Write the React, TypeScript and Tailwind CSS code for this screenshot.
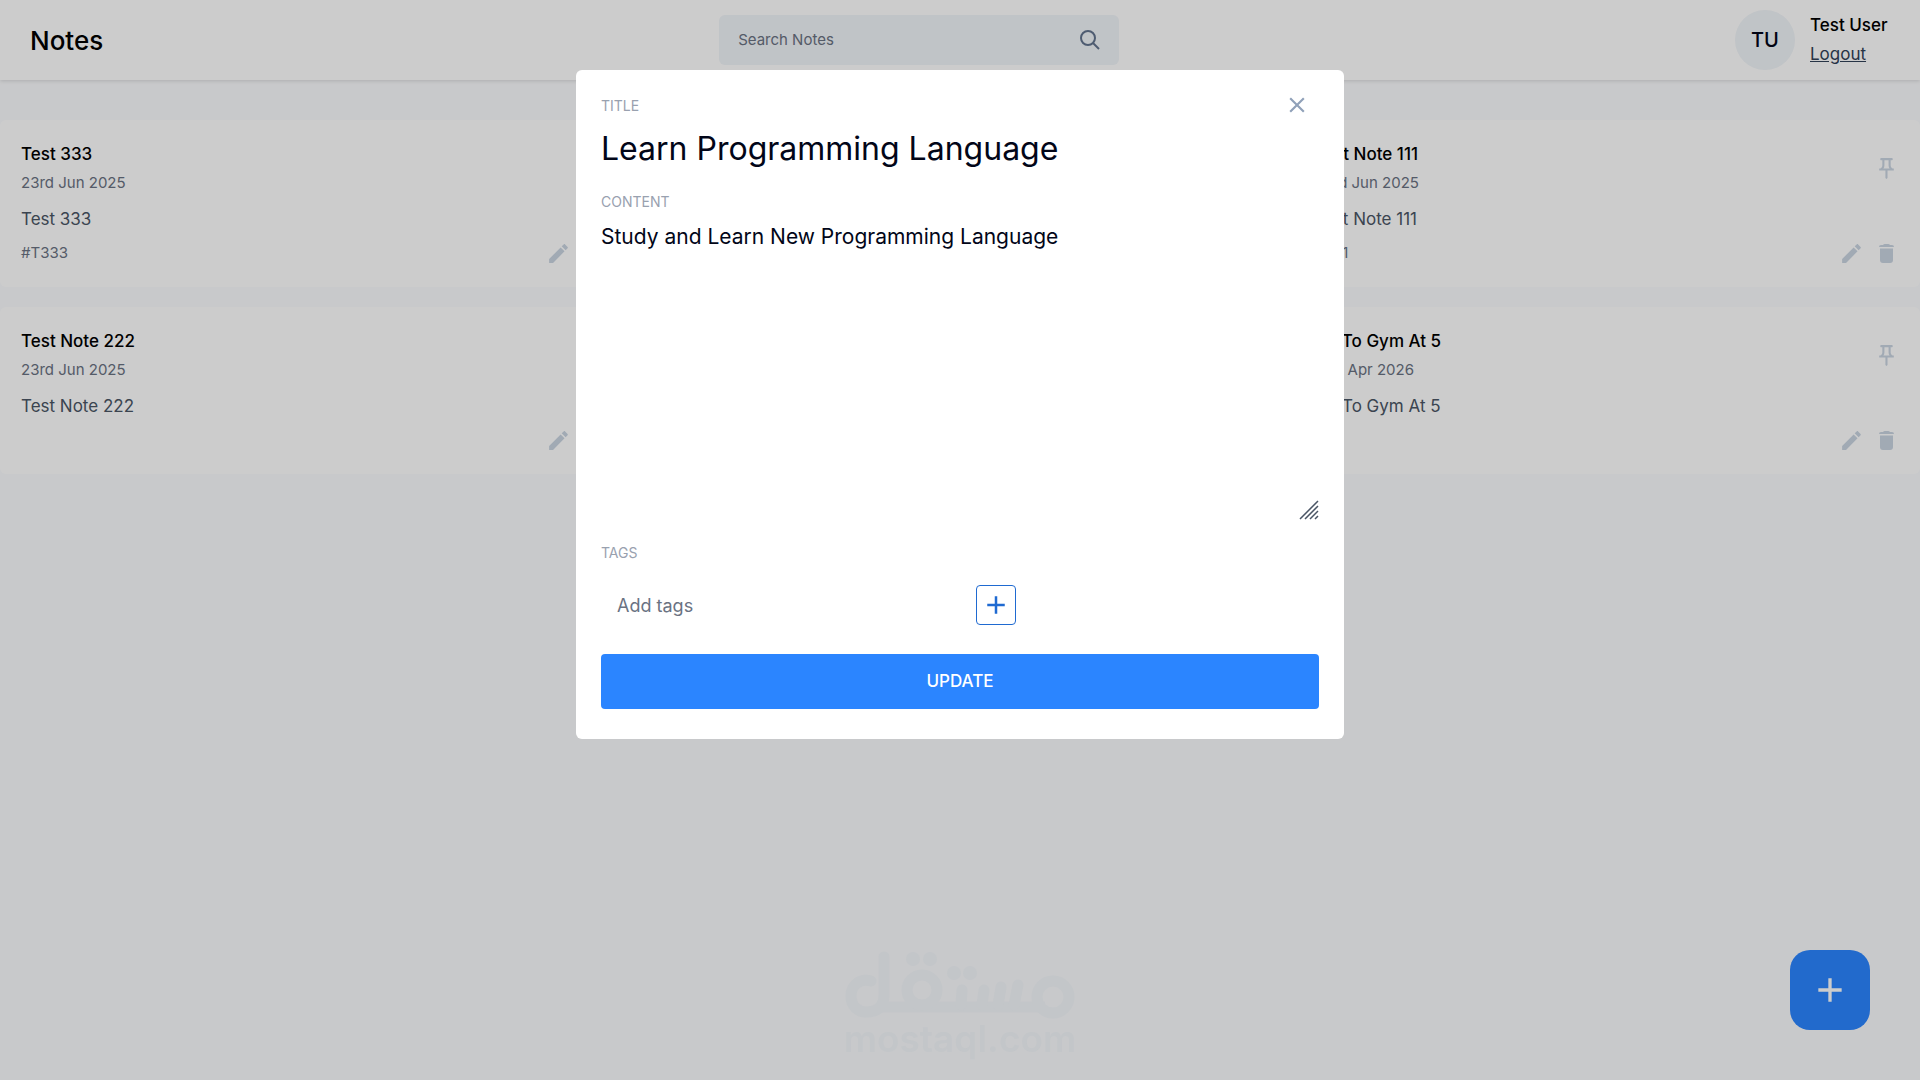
import { useState } from 'react'
import { IoMdCreate } from 'react-icons/io'
import { MdAdd, MdClose, MdOutlinePushPin } from 'react-icons/md'

type Note = {
    id: number
    title: string
    date: string
    content: string
    tags: string[]
}

const NOTES: Note[] = [
    { id: 1, title: 'Test 333', date: '23rd Jun 2025', content: 'Test 333', tags: ['T333'] },
    { id: 2, title: 'Learn Programming Language', date: '23rd Jun 2025', content: 'Study and Learn New Programming Language', tags: [] },
    { id: 3, title: 'Test Note 111', date: '23rd Jun 2025', content: 'Test Note 111', tags: ['1111'] },
    { id: 4, title: 'Test Note 222', date: '23rd Jun 2025', content: 'Test Note 222', tags: [] },
    { id: 5, title: 'Read A Book', date: '23rd Jun 2025', content: 'Read A Book', tags: [] },
    { id: 6, title: 'Go To Gym At 5', date: '15th Apr 2026', content: 'Go To Gym At 5', tags: [] },
]

function SearchIcon() {
    return (
        <svg width="20" height="20" viewBox="0 0 20 20" fill="none" stroke="currentColor" strokeWidth="2">
            <circle cx="8" cy="8" r="7" />
            <path d="M13 13L19 19" />
        </svg>
    )
}

function TrashIcon() {
    return (
        <svg width="25" height="25" viewBox="0 0 25 25" fill="currentColor">
            <path d="M5 6Q5 4 7 4H9Q9.500 3 11 3H14Q15.500 3 16 4H18Q20 4 20 6Z" />
            <path d="M6 7.500H19V19Q19 22 16 22H9Q6 22 6 19Z" />
        </svg>
    )
}

function Navbar() {
    const [query, setQuery] = useState('')

    return (
        <header className="flex h-20 items-center justify-between bg-white px-[30px] shadow-[0_1px_4px_rgba(0,0,0,0.14)]">
            <h2 className="text-[26px] font-medium text-black">Notes</h2>

            <div className="flex h-[50px] w-[400px] items-center rounded-md bg-slate-100 px-[19px]">
                <input
                    type="text"
                    aria-label="Search Notes"
                    placeholder="Search Notes"
                    value={query}
                    onChange={(e) => setQuery(e.target.value)}
                    className="w-full bg-transparent text-[15px] outline-none placeholder:text-gray-500"
                />
                <button aria-label="Search" className="text-slate-500">
                    <SearchIcon />
                </button>
            </div>

            <div className="flex items-center gap-[15px]">
                <div className="flex size-[60px] items-center justify-center rounded-full bg-slate-100 text-xl font-medium text-slate-950">
                    TU
                </div>
                <div className="flex min-w-20 flex-col items-start">
                    <p className="text-[17px] leading-[29px] font-medium text-black">Test User</p>
                    <button className="text-[17px] leading-[29px] text-slate-700 underline">Logout</button>
                </div>
            </div>
        </header>
    )
}

function NoteCard({ note }: { note: Note }) {
    return (
        <article className="flex h-[167px] flex-col rounded-md bg-white px-[21px] pt-[22px] pb-5">
            <div className="flex items-start justify-between">
                <div>
                    <h6 className="text-[17px] leading-[25px] font-medium text-black">{note.title}</h6>
                    <span className="block text-[15px] leading-8 text-gray-500">{note.date}</span>
                </div>
                <button aria-label="Pin note" className="mt-3.5 text-slate-300">
                    <MdOutlinePushPin size={25} />
                </button>
            </div>
            <p className="mt-2 text-[17px] leading-[25px] text-gray-600">{note.content}</p>
            <div className="flex h-[42px] shrink-0 items-center justify-between">
                <div className="text-[15px] text-gray-500">{note.tags.map((tag) => `#${tag} `)}</div>
                <div className="flex items-center gap-2.5 text-slate-300">
                    <button aria-label="Edit note">
                        <IoMdCreate size={25} />
                    </button>
                    <button aria-label="Delete note">
                        <TrashIcon />
                    </button>
                </div>
            </div>
        </article>
    )
}

function EditNoteModal() {
    const [title, setTitle] = useState('Learn Programming Language')
    const [content, setContent] = useState('Study and Learn New Programming Language')
    const [tag, setTag] = useState('')

    return (
        <div className="fixed inset-0 z-20 bg-black/20">
            <div role="dialog" aria-label="Edit note" className="relative mx-auto mt-[70px] w-2/5 rounded-md bg-white px-[25px] pt-[26px] pb-[30px]">
                <button aria-label="Close" className="absolute top-[22px] right-[34px] text-slate-400">
                    <MdClose size={26} />
                </button>

                <div className="flex flex-col">
                    <label htmlFor="title" className="text-sm leading-5 text-gray-400">TITLE</label>
                    <input
                        id="title"
                        type="text"
                        value={title}
                        onChange={(e) => setTitle(e.target.value)}
                        className="mt-2.5 h-[45px] text-[32px] text-slate-950 outline-none"
                    />
                </div>

                <div className="mt-[21px] flex flex-col">
                    <label htmlFor="content" className="text-sm leading-5 text-gray-400">CONTENT</label>
                    <div className="relative mt-2.5 flex">
                        <textarea
                            id="content"
                            value={content}
                            onChange={(e) => setContent(e.target.value)}
                            className="h-[300px] w-full resize-none text-[21px] leading-[30px] text-slate-950 outline-none"
                        />
                        <svg className="absolute right-0 bottom-0.5 text-gray-600" width="20" height="20" viewBox="0 0 20 20" stroke="currentColor" strokeWidth="1.5">
                            <path d="M1 19L19 1M6 19L19 6M11 19L19 11M16 19L19 16" />
                        </svg>
                    </div>
                </div>

                <div className="mt-[21px]">
                    <label htmlFor="tags" className="block text-sm leading-5 text-gray-400">TAGS</label>
                    <div className="mt-[22px] flex items-center gap-5">
                        <input
                            id="tags"
                            type="text"
                            placeholder="Add tags"
                            value={tag}
                            onChange={(e) => setTag(e.target.value)}
                            className="h-10 w-[355px] px-4 text-lg outline-none placeholder:text-gray-500"
                        />
                        <button aria-label="Add tag" className="flex size-10 items-center justify-center rounded border border-[#1f6ad1] text-[#1f6ad1]">
                            <MdAdd size={30} />
                        </button>
                    </div>
                </div>

                <button className="mt-[29px] h-[55px] w-full rounded bg-[#2b85ff] text-[17px] font-medium text-white">
                    UPDATE
                </button>
            </div>
        </div>
    )
}

function Watermark() {
    return (
        <div className="pointer-events-none fixed inset-x-0 bottom-[23px] z-30 flex flex-col items-center text-[#c3c6c9]">
            <svg width="230" height="70" viewBox="0 0 230 70" fill="none" stroke="currentColor" strokeWidth="11" strokeLinecap="round">
                <path d="M26 30C14 27 6 35 6 45C6 55 13 61 21 61C32 61 39 56 39 44V6" />
                <path d="M35 56H200" strokeLinecap="butt" />
                <circle cx="77" cy="39" r="15" />
                <circle cx="208" cy="46" r="16" />
                <path d="M117 39L116 54M139 39L137 54M156 36L153 54M173 34L169 54" />
                <g fill="currentColor" stroke="none">
                    <circle cx="68" cy="8" r="7" />
                    <circle cx="85" cy="8" r="7" />
                    <circle cx="109" cy="22" r="7" />
                    <circle cx="125" cy="22" r="7" />
                </g>
            </svg>
            <span className="text-[37px] leading-9 font-semibold">mostaql.com</span>
        </div>
    )
}

export default function App() {
    return (
        <div className="min-h-screen bg-[#fbfcfe] font-['Inter',sans-serif]">
            <Navbar />
            <main className="mt-10 grid grid-cols-3 gap-5">
                {NOTES.map((note) => (
                    <NoteCard key={note.id} note={note} />
                ))}
            </main>
            <button aria-label="Add note" className="fixed right-[50px] bottom-[50px] flex size-20 items-center justify-center rounded-[20px] bg-[#2b85ff] text-white">
                <MdAdd size={40} />
            </button>
            <EditNoteModal />
            <Watermark />
        </div>
    )
}
